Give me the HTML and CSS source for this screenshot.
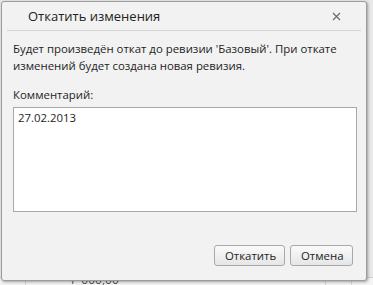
FILE: index.html
```html
<!DOCTYPE html>
<html lang="ru">
<head>
  <meta charset="UTF-8" />
  <title>Откатить изменения</title>
  <link rel="stylesheet" href="styles.css">
</head>
<body>

  <div class="backdrop">
    <div class="grid-row">
      <span class="grid-cell"></span>
      <span class="grid-cell wide">Р 000,00</span>
      <span class="grid-cell"></span>
    </div>
  </div>

  <div class="dialog">
    <!-- Title bar -->
    <div class="dialog-header">
      <span class="dialog-title">Откатить изменения</span>
      <svg class="close-button" width="9" height="9" viewBox="0 0 9 9">
        <path d="M1 1 L8 8 M8 1 L1 8" stroke="#6a6a6a" stroke-width="1.2" fill="none"/>
      </svg>
    </div>

    <!-- Content -->
    <div class="dialog-body">
      <p class="message">Будет произведён откат до ревизии 'Базовый'. При откате изменений будет создана новая ревизия.</p>
      <label class="comment-label" for="comment">Комментарий:</label>
      <textarea id="comment" class="comment-input">27.02.2013</textarea>
    </div>

    <!-- Buttons -->
    <div class="dialog-footer">
      <button class="btn">Откатить</button>
      <button class="btn">Отмена</button>
    </div>
  </div>

</body>
</html>
```

FILE: styles.css
```css
:root {
  --dialog-bg: #f2f2f2;
  --border: #9c9c9c;
  --text-dark: #1e1e1e;
  --line: #d4d4d4;
}

* {
  box-sizing: border-box;
  margin: 0;
  padding: 0;
}

body {
  font-family: 'Open Sans', 'Noto Sans', sans-serif;
  background-color: #e9e9e9;
  color: var(--text-dark);
  width: 373px;
  height: 285px;
  overflow: hidden;
  position: relative;
  padding: 1px 0 0 1px;
}

/* app content peeking out from under the dialog */
.backdrop {
  position: absolute;
  left: 0;
  bottom: 0;
  width: 100%;
  height: 8px;
  background: #f4f4f4;
  border-top: 1px solid #d0d0d0;
}

.grid-row {
  display: flex;
  height: 100%;
}

.grid-cell {
  width: 26px;
  border-right: 1px solid #d8d8d8;
  font-size: 12px;
  color: #555;
  line-height: 4px;
}

.grid-cell.wide {
  flex: none;
  width: 300px;
  padding-left: 45px;
  overflow: hidden;
  white-space: nowrap;
}

.dialog {
  position: relative;
  width: 366px;
  height: 280px;
  background: var(--dialog-bg);
  border: 1px solid var(--border);
  border-radius: 3px;
  box-shadow: 1px 1px 3px rgba(0, 0, 0, 0.35);
  display: flex;
  flex-direction: column;
}

.dialog-header {
  display: flex;
  align-items: center;
  justify-content: space-between;
  height: 29px;
  margin: 0 5px;
  padding: 0 20px 0 21px;
  border-bottom: 1px solid var(--line);
}

.dialog-title {
  font-size: 13px;
  color: #222;
}

.close-button {
  cursor: pointer;
}

.dialog-body {
  flex: 1;
  padding: 9px 9px 0 11px;
  display: flex;
  flex-direction: column;
}

.message {
  font-size: 11.4px;
  line-height: 17px;
  margin-bottom: 12px;
}

.comment-label {
  font-size: 11.4px;
  line-height: 17px;
  margin-bottom: 4px;
}

.comment-input {
  width: 344px;
  height: 105px;
  border: 1px solid #a8a8ac;
  background: #fff;
  font-family: inherit;
  font-size: 11.4px;
  color: var(--text-dark);
  padding: 2px 4px;
  resize: none;
}

.dialog-footer {
  display: flex;
  justify-content: flex-end;
  gap: 5px;
  padding: 0 13px 14px 0;
}

.btn {
  height: 21px;
  padding: 0 10px;
  font-family: inherit;
  font-size: 11.4px;
  color: #222;
  background: linear-gradient(#fafafa, #e6e6e6);
  border: 1px solid #a9a9a9;
  border-radius: 3px;
  cursor: pointer;
}

.btn:first-child {
  width: 71px;
}

.btn:last-child {
  width: 63px;
}
```
